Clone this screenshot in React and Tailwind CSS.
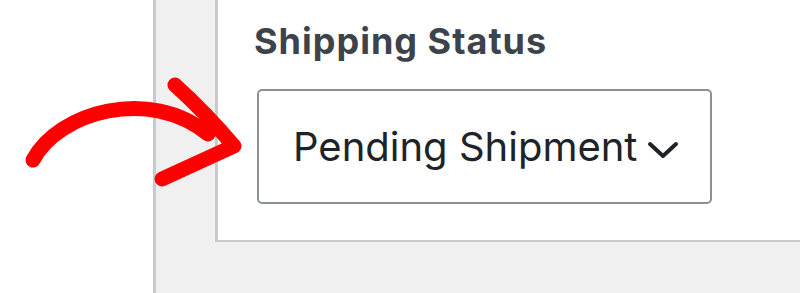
import React from "react";

const HandArrow = () => (
  <svg
    className="absolute left-0 top-0 pointer-events-none"
    width="260"
    height="200"
    viewBox="0 0 260 200"
    fill="none"
  >
    <path
      d="M33 160 C 58 112 150 86 208 134"
      stroke="#ff0000"
      strokeWidth="15"
      strokeLinecap="round"
    />
    <path
      d="M175 85 Q 205 112 234 146 L 162 179"
      stroke="#ff0000"
      strokeWidth="15"
      strokeLinecap="round"
      strokeLinejoin="round"
    />
  </svg>
);

const App = () => {
  return (
    <div
      className="relative flex w-[800px] h-[293px] overflow-hidden bg-white"
      style={{ fontFamily: "Inter, 'Liberation Sans', sans-serif" }}
    >
      {/* white gutter left of the admin screen */}
      <div className="w-[153px] shrink-0 bg-white"></div>

      {/* admin background */}
      <div className="flex-1 bg-[#f0f0f1] border-l-[3px] border-[#c9cacd] pl-[59px]">
        {/* meta box */}
        <div className="bg-white border-l-[3px] border-b-[2px] border-[#c9cacd] pl-[36px] pt-[23px] pb-[36px]">
          <div className="text-[36px] leading-none font-bold tracking-[1px] text-[#3c434a]">
            Shipping Status
          </div>
          <div className="mt-[30px] ml-[3px] w-[455px] h-[115px] border-2 border-[#8c8f94] rounded-[5px] flex items-center pl-[34px]">
            <span className="text-[40px] leading-none text-[#1d2327]">
              Pending Shipment
            </span>
            <svg
              className="ml-[10px] mt-[6px]"
              width="32"
              height="18"
              viewBox="0 0 32 18"
              fill="none"
            >
              <path
                d="M3 3 L16 15 L29 3"
                stroke="#1d2327"
                strokeWidth="4"
                strokeLinecap="round"
                strokeLinejoin="round"
              />
            </svg>
          </div>
        </div>
      </div>

      <HandArrow />
    </div>
  );
};

export default App;
